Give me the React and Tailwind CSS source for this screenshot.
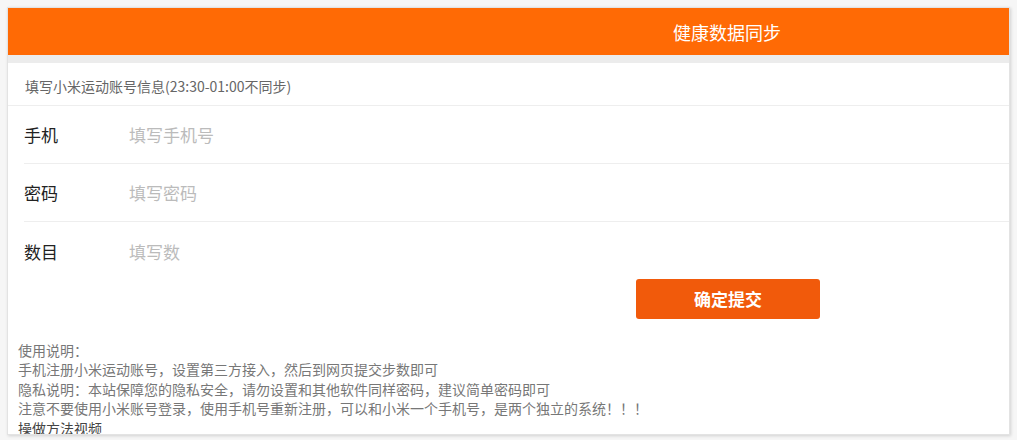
const font = { fontFamily: '"Microsoft YaHei", "Noto Sans CJK SC", "Noto Sans", sans-serif' };

const campos = [
  { label: "手机", placeholder: "填写手机号" },
  { label: "密码", placeholder: "填写密码" },
  { label: "数目", placeholder: "填写数" },
];

const notas = [
  "使用说明：",
  "手机注册小米运动账号，设置第三方接入，然后到网页提交步数即可",
  "隐私说明：本站保障您的隐私安全，请勿设置和其他软件同样密码，建议简单密码即可",
  "注意不要使用小米账号登录，使用手机号重新注册，可以和小米一个手机号，是两个独立的系统！！！",
];

export default function App() {
  return (
    <div className="w-[1017px] h-[440px] bg-[#f6f6f6] pt-[7px] pl-[7px] overflow-hidden" style={font}>
      <div className="w-[1003px] h-[428px] bg-white border border-[#e3e3e3] shadow-[1px_1px_3px_rgba(0,0,0,0.15)] overflow-hidden">
        {/* cabecera */}
        <div className="h-[47px] bg-[#ff6a05] flex items-center pl-[665px]">
          <span className="text-white text-[18px] leading-none">健康数据同步</span>
        </div>
        <div className="h-[8px] bg-[#ececec]" />

        <div className="h-[43px] flex items-center pl-[17px] border-b border-[#eeeeee]">
          <span className="text-[14px] text-[#666] leading-none mt-[3px]">填写小米运动账号信息(23:30-01:00不同步)</span>
        </div>

        {/* formulario */}
        <div className="pl-[16px]">
          {campos.map((c, i) => (
            <div
              key={c.label}
              className={`h-[58px] flex items-center ${i < campos.length - 1 ? "border-b border-[#eeeeee]" : ""}`}
            >
              <span className="w-[105px] text-[17px] text-[#222] leading-none">{c.label}</span>
              <input
                type="text"
                placeholder={c.placeholder}
                className="flex-1 text-[17px] outline-none placeholder:text-[#bbbbbb] leading-none"
                style={font}
              />
            </div>
          ))}
        </div>

        <div className="pl-[628px] mt-[-1px]">
          <button className="w-[184px] h-[40px] bg-[#f15a0b] rounded-[3px] text-white text-[17px] font-bold" style={font}>
            确定提交
          </button>
        </div>

        {/* instrucciones */}
        <div className="pl-[10px] pt-[22px] text-[14px] leading-[19.3px] text-[#777]">
          {notas.map((n) => (
            <div key={n}>{n}</div>
          ))}
          <div className="text-[#444] mt-[1px]">操做方法视频</div>
        </div>
      </div>
    </div>
  );
}
